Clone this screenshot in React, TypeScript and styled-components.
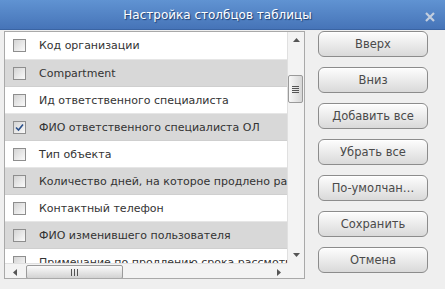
import React from 'react';
import styled, { createGlobalStyle } from 'styled-components';

const GlobalStyle = createGlobalStyle`
  html, body {
    margin: 0;
    padding: 0;
    background: #efefef;
  }
  * {
    box-sizing: border-box;
  }
`;

const columns = [
  { label: 'Код организации', checked: false },
  { label: 'Compartment', checked: false },
  { label: 'Ид ответственного специалиста', checked: false },
  { label: 'ФИО ответственного специалиста ОЛ', checked: true },
  { label: 'Тип объекта', checked: false },
  { label: 'Количество дней, на которое продлено рассмотрение', checked: false },
  { label: 'Контактный телефон', checked: false },
  { label: 'ФИО изменившего пользователя', checked: false },
  { label: 'Примечание по продлению срока рассмотрения', checked: false },
];

const buttons = ['Вверх', 'Вниз', 'Добавить все', 'Убрать все', 'По-умолчан…', 'Сохранить', 'Отмена'];

export default function App() {
  return (
    <>
      <GlobalStyle />
      <Dialog>
        <TitleBar>
          <Title>Настройка столбцов таблицы</Title>
          <CloseButton>
            <svg width="10" height="10" viewBox="0 0 10 10">
              <path d="M1 1 L9 9 M9 1 L1 9" stroke="#c3cede" strokeWidth="2.2" />
            </svg>
          </CloseButton>
        </TitleBar>
        <Body>
          <ListFrame>
            <Rows>
              {columns.map((c, i) => (
                <Row key={c.label} $alt={i % 2 === 1}>
                  <Checkbox $checked={c.checked}>
                    {c.checked && (
                      <svg width="9" height="9" viewBox="0 0 9 9">
                        <path d="M1 4.5 L3.5 7 L8 1.5" fill="none" stroke="#2a4f8a" strokeWidth="1.6" />
                      </svg>
                    )}
                  </Checkbox>
                  <Label>{c.label}</Label>
                </Row>
              ))}
            </Rows>
            <VScroll>
              <Arrow>
                <svg width="7" height="4" viewBox="0 0 7 4"><path d="M0 4 L3.5 0 L7 4Z" fill="#555" /></svg>
              </Arrow>
              <VTrack>
                <VThumb>
                  <Grip $vertical />
                </VThumb>
              </VTrack>
              <Arrow>
                <svg width="7" height="4" viewBox="0 0 7 4"><path d="M0 0 L3.5 4 L7 0Z" fill="#555" /></svg>
              </Arrow>
            </VScroll>
            <HScroll>
              <Arrow>
                <svg width="4" height="7" viewBox="0 0 4 7"><path d="M4 0 L0 3.5 L4 7Z" fill="#555" /></svg>
              </Arrow>
              <HTrack>
                <HThumb>
                  <Grip />
                </HThumb>
              </HTrack>
              <Arrow>
                <svg width="4" height="7" viewBox="0 0 4 7"><path d="M0 0 L4 3.5 L0 7Z" fill="#555" /></svg>
              </Arrow>
            </HScroll>
            <Corner />
          </ListFrame>
          <ButtonColumn>
            {buttons.map((b) => (
              <ActionButton key={b}>{b}</ActionButton>
            ))}
          </ButtonColumn>
        </Body>
      </Dialog>
    </>
  );
}

const Dialog = styled.div`
  width: 445px;
  height: 289px;
  background: #efefef;
  display: flex;
  flex-direction: column;
  font-family: 'DejaVu Sans', 'Liberation Sans', sans-serif;
  overflow: hidden;
`;

const TitleBar = styled.div`
  height: 30px;
  flex-shrink: 0;
  position: relative;
  display: flex;
  align-items: center;
  justify-content: center;
  padding-right: 10px;
  background: linear-gradient(#6093d2, #4674b8);
  border-bottom: 1px solid #3a64a3;
`;

const Title = styled.div`
  color: #fff;
  font-size: 12px;
  text-shadow: 1px 1px 1px #1d3c6c;
`;

const CloseButton = styled.div`
  position: absolute;
  right: 10px;
  top: 12px;
  display: flex;
`;

const Body = styled.div`
  display: flex;
  padding: 1px 0 0 4px;
  gap: 13px;
`;

const ListFrame = styled.div`
  width: 301px;
  height: 248px;
  border: 1px solid #a9a9a9;
  background: #fff;
  display: grid;
  grid-template-columns: 282px 1fr;
  grid-template-rows: 231px 1fr;
  overflow: hidden;
`;

const Rows = styled.div`
  overflow: hidden;
`;

const Row = styled.div<{ $alt: boolean }>`
  height: 27px;
  display: flex;
  align-items: center;
  padding-left: 8px;
  gap: 13px;
  white-space: nowrap;
  background: ${({ $alt }) => ($alt ? '#d8d8d8' : '#fff')};
  border-top: 1px solid ${({ $alt }) => ($alt ? '#e6e6e6' : '#cfcfcf')};
  &:first-child {
    border-top: none;
  }
`;

const Checkbox = styled.div<{ $checked: boolean }>`
  width: 13px;
  height: 13px;
  flex-shrink: 0;
  border: 1px solid #8e8e8e;
  background: linear-gradient(135deg, #d4d4d4, #fafafa);
  display: flex;
  align-items: center;
  justify-content: center;
`;

const Label = styled.span`
  font-size: 11px;
  color: #333;
`;

const VScroll = styled.div`
  background: #f3f3f3;
  border-left: 1px solid #e0e0e0;
  display: flex;
  flex-direction: column;
`;

const Arrow = styled.div`
  width: 16px;
  height: 16px;
  display: flex;
  align-items: center;
  justify-content: center;
  flex-shrink: 0;
`;

const VTrack = styled.div`
  flex: 1;
  padding-top: 27px;
`;

const VThumb = styled.div`
  width: 15px;
  height: 28px;
  border: 1px solid #9a9a9a;
  border-radius: 2px;
  background: linear-gradient(90deg, #f8f8f8, #d6d6d6);
  display: flex;
  align-items: center;
  justify-content: center;
`;

const Grip = styled.div<{ $vertical?: boolean }>`
  width: 7px;
  height: 7px;
  background: ${({ $vertical }) =>
    $vertical
      ? 'repeating-linear-gradient(#555 0 1px, transparent 1px 2px)'
      : 'repeating-linear-gradient(90deg, #555 0 1px, transparent 1px 3px)'};
`;

const HScroll = styled.div`
  background: #f3f3f3;
  border-top: 1px solid #e0e0e0;
  display: flex;
  align-items: center;
  padding-left: 2px;
`;

const HTrack = styled.div`
  flex: 1;
  display: flex;
  align-items: center;
  padding-left: 3px;
`;

const HThumb = styled.div`
  width: 97px;
  height: 14px;
  border: 1px solid #9a9a9a;
  border-radius: 2px;
  background: linear-gradient(#fbfbfb, #d2d2d2);
  display: flex;
  align-items: center;
  justify-content: center;
`;

const Corner = styled.div`
  background: #f3f3f3;
`;

const ButtonColumn = styled.div`
  display: flex;
  flex-direction: column;
  gap: 10px;
`;

const ActionButton = styled.button`
  width: 110px;
  height: 26px;
  border: 1px solid #8c8c8c;
  border-radius: 6px;
  background: linear-gradient(#fdfdfd, #d9d9d9);
  box-shadow: inset 0 1px 0 #fff;
  font-family: 'DejaVu Sans', 'Liberation Sans', sans-serif;
  font-size: 11.5px;
  color: #4a4a4a;
  padding: 0;
  white-space: nowrap;
  overflow: hidden;
`;
